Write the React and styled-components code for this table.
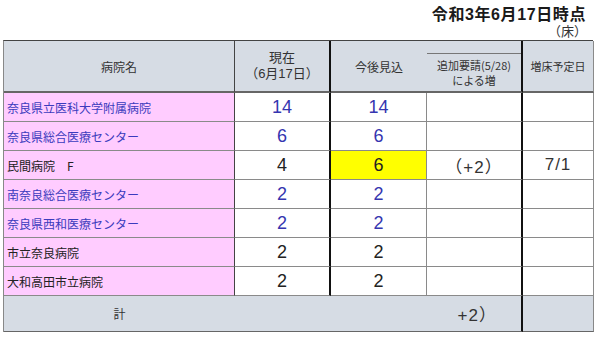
import * as React from "react";
import styled, { createGlobalStyle } from "styled-components";

const GlobalStyle = createGlobalStyle`
    body {
        margin: 0;
        background: #ffffff;
        font-family: "Liberation Sans", "Noto Sans CJK JP", sans-serif;
        color: #222;
    }
`

const Page = styled.div`
    width: 600px;
    height: 338px;
    padding: 5px 0 0 3px;
    box-sizing: border-box;
    overflow: hidden;
`

const TitleBlock = styled.div`
    width: 590px;
    text-align: right;
    font-family: "Liberation Sans", "Noto Sans CJK JP", sans-serif;
`

const Title = styled.div`
    font-size: 16px;
    line-height: 19px;
    font-weight: 700;
    letter-spacing: 0.6px;
    color: #1a1a1a;
    padding-right: 7px;
`

const Unit = styled.div`
    font-size: 13px;
    line-height: 16px;
    color: #333;
    padding-right: 6px;
`

const Grid = styled.div`
    display: grid;
    grid-template-columns: 231px 96px 96px 96px 71px;
    grid-template-rows: 52px repeat(7, 29px) 36px;
    width: 590px;
    box-sizing: border-box;
    border-top: 1px solid #444;
    border-left: 1px solid #888;
`

const Cell = styled.div`
    box-sizing: border-box;
    display: flex;
    align-items: center;
    justify-content: ${(p) => (p.$left ? "flex-start" : "center")};
    padding-left: ${(p) => (p.$left ? "3px" : "0")};
    border-bottom: 1px solid #8a8a8a;
    border-right: ${(p) =>
        p.$thick ? "2px solid #111" : p.$dark ? "1px solid #444" : p.$noRight ? "none" : "1px solid #8a8a8a"};
    background: ${(p) => p.$bg || "#ffffff"};
    color: ${(p) => p.$color || "#222"};
    white-space: nowrap;
    overflow: hidden;
`

const HeadCell = styled(Cell)`
    background: #d6dce4;
    border-bottom: 2px solid #666;
    font-family: "Noto Sans CJK JP", sans-serif;
    font-size: ${(p) => p.$size || 12}px;
    line-height: 17px;
    color: #333;
    text-align: center;
    flex-direction: column;
`

const HeadLine = styled.div`
    font-family: "Liberation Sans", "Noto Sans CJK JP", sans-serif;
    line-height: 16px;
    height: 16px;
`

const SubHead = styled.div`
    align-self: stretch;
    margin-top: 12px;
    flex: 1;
    border-top: 1px solid #777;
    border-left: 1px solid #777;
    margin-left: -1px;
    display: flex;
    flex-direction: column;
    align-items: center;
    justify-content: center;
    font-size: 11px;
    line-height: 15px;
`

const Name = styled(Cell)`
    background: #ffccff;
    font-family: "Noto Sans CJK JP", sans-serif;
    font-size: 12px;
    color: ${(p) => (p.$blue ? "#3b3bbd" : "#222")};
`

const Num = styled(Cell)`
    font-size: 18px;
    color: ${(p) => (p.$blue ? "#3535b0" : "#222")};
`

const Note = styled(Cell)`
    font-family: "Liberation Sans", "Noto Sans CJK JP", sans-serif;
    font-size: 17px;
    letter-spacing: 1px;
    color: #333;
`

const Total = styled.div`
    grid-column: 1 / span 4;
    display: grid;
    grid-template-columns: 231px 96px 96px 94px;
    background: #d6dce4;
    border-bottom: 1px solid #666;
    border-right: 2px solid #111;
    box-sizing: border-box;
`

const TotalText = styled.div`
    display: flex;
    align-items: center;
    justify-content: ${(p) => (p.$right ? "flex-end" : "center")};
    padding-right: ${(p) => (p.$right ? "24px" : "0")};
    font-family: "Liberation Sans", "Noto Sans CJK JP", sans-serif;
    font-size: ${(p) => p.$size || 12}px;
    letter-spacing: ${(p) => (p.$right ? "1px" : "0")};
    color: #333;
`

const TotalEnd = styled.div`
    background: #d6dce4;
    border-bottom: 1px solid #666;
    border-right: 1px solid #888;
    box-sizing: border-box;
`

const rows = [
    { name: "奈良県立医科大学附属病院", now: 14, next: 14, blue: true },
    { name: "奈良県総合医療センター", now: 6, next: 6, blue: true },
    { name: "民間病院　F", now: 4, next: 6, blue: false, add: "（+2）", date: "7/1", mark: true },
    { name: "南奈良総合医療センター", now: 2, next: 2, blue: true },
    { name: "奈良県西和医療センター", now: 2, next: 2, blue: true },
    { name: "市立奈良病院", now: 2, next: 2, blue: false },
    { name: "大和高田市立病院", now: 2, next: 2, blue: false },
];

export default function App() {
    return (
        <Page>
            <GlobalStyle />
            <TitleBlock>
                <Title>令和3年6月17日時点</Title>
                <Unit>（床）</Unit>
            </TitleBlock>
            <Grid>
                <HeadCell $dark>病院名</HeadCell>
                <HeadCell $thick $size={13}>
                    <HeadLine>現在</HeadLine>
                    <HeadLine>（6月17日）</HeadLine>
                </HeadCell>
                <HeadCell $noRight>今後見込</HeadCell>
                <HeadCell $thick>
                    <SubHead>
                        <span>追加要請(5/28)</span>
                        <span>による増</span>
                    </SubHead>
                </HeadCell>
                <HeadCell $size={11}>増床予定日</HeadCell>

                {rows.map((row, index) => (
                    <React.Fragment key={index}>
                        <Name $left $dark $blue={row.blue}>{row.name}</Name>
                        <Num $thick $blue={row.blue}>{row.now}</Num>
                        <Num $blue={row.blue} $bg={row.mark ? "#ffff00" : undefined}>{row.next}</Num>
                        <Note $thick>{row.add || ""}</Note>
                        <Note>{row.date || ""}</Note>
                    </React.Fragment>
                ))}

                <Total>
                    <TotalText>計</TotalText>
                    <div />
                    <div />
                    <TotalText $right $size={17}>+2）</TotalText>
                </Total>
                <TotalEnd />
            </Grid>
        </Page>
    );
}
